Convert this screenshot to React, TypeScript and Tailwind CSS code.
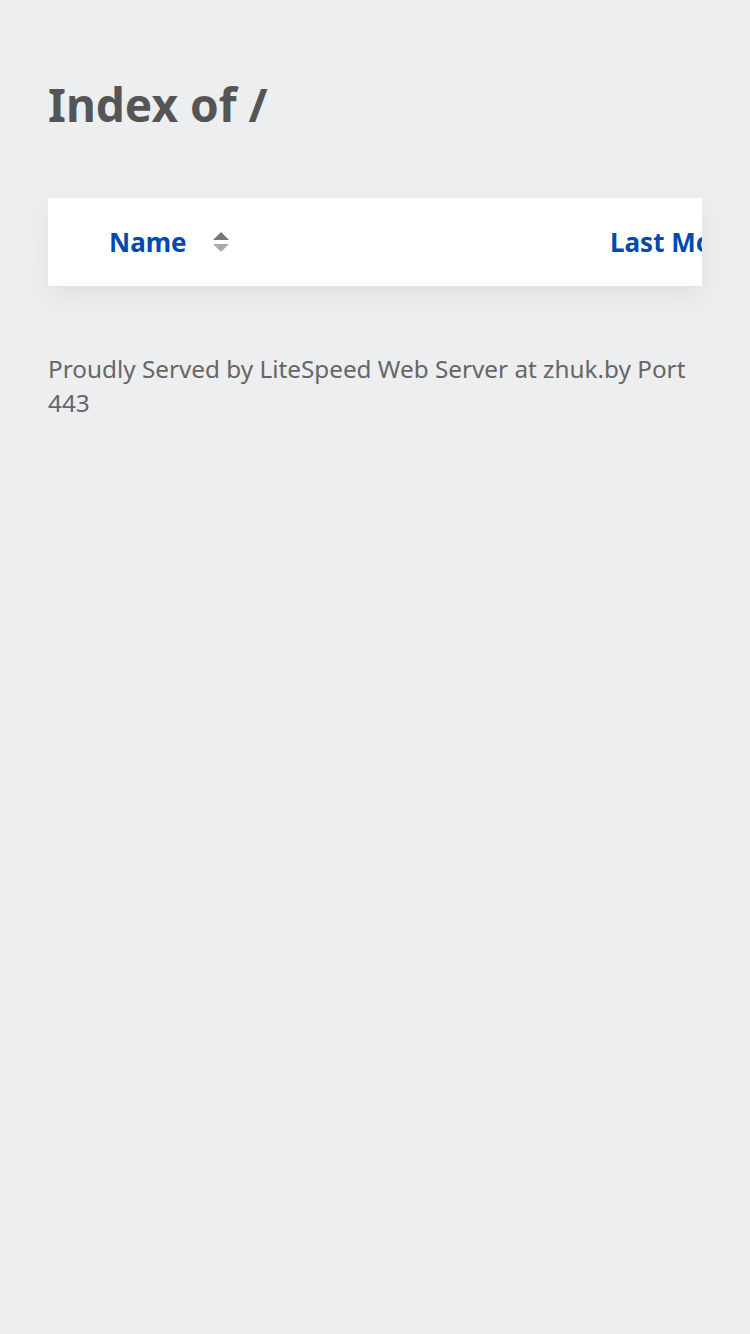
const SortIcon = () => (
  <svg width="16" height="20" viewBox="0 0 16 20" className="ml-[26px] shrink-0">
    <polygon points="8,0 16,8 0,8" fill="#777" />
    <polygon points="0,12 16,12 8,20" fill="#aaa" />
  </svg>
);

export default function App() {
  return (
    <div className="min-h-[1334px] bg-[#edeef0] px-12 pt-[74px] font-['Noto_Sans',sans-serif]">
      <h1 className="text-[46px] font-bold leading-[60px] text-[#555]">Index of /</h1>
      <div className="mt-[64px] h-[88px] overflow-hidden bg-white shadow-[0_10px_24px_rgba(0,0,0,0.06)]">
        <div className="flex h-full w-[900px] items-center text-[26px] font-bold text-[#0049ad]">
          <div className="flex w-[562px] items-center pl-[61px]">
            <span>Name</span>
            <SortIcon />
          </div>
          <span>Last Modified</span>
        </div>
      </div>
      <p className="mt-[66px] text-[24.3px] leading-[34px] text-[#666]">
        Proudly Served by LiteSpeed Web Server at zhuk.by Port 443
      </p>
    </div>
  );
}
